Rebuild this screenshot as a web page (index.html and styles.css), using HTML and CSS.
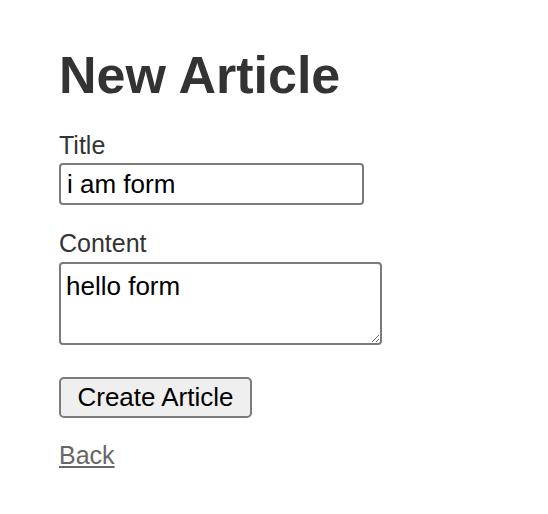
FILE: index.html
```html
<!DOCTYPE html>
<html lang="en">
<head>
    <meta charset="UTF-8">
    <meta name="viewport" content="width=device-width, initial-scale=1.0">
    <title>New Article</title>
    <link rel="stylesheet" href="styles.css">
</head>
<body>
    <h1>New Article</h1>
    <form class="article-form">
        <div class="field">
            <label for="article_title">Title</label>
            <input type="text" id="article_title" name="title" value="i am form">
        </div>
        <div class="field field-content">
            <label for="article_content">Content</label>
            <textarea id="article_content" name="content">hello form</textarea>
        </div>
        <div class="actions">
            <button type="submit" class="button">Create Article</button>
        </div>
    </form>
    <a class="back" href="#">Back</a>
</body>
</html>
```

FILE: styles.css
```css
body {
    margin: 0;
    padding: 0 0 0 59px;
    font-family: "Liberation Sans", Arial, sans-serif;
    font-size: 25px;
    line-height: 1.15;
    color: #333;
    background-color: #fff;
}
h1 {
    margin: 46px 0 0;
    font-size: 52px;
    line-height: 1.15;
    font-weight: bold;
}
.field {
    margin-top: 25px;
}
.field-content {
    margin-top: 24px;
}
label {
    display: block;
    height: 29px;
}
input, textarea, .button {
    font-family: "Liberation Sans", Arial, sans-serif;
    font-size: 26px;
    color: #000;
    box-sizing: border-box;
}
#article_title {
    display: block;
    margin-top: 3px;
    width: 305px;
    height: 42px;
    padding: 2px 6px 0;
    border: 2px solid #7b7b7b;
    border-radius: 4px;
}
#article_content {
    display: block;
    margin-top: 4px;
    width: 323px;
    height: 83px;
    padding: 8px 5px 4px;
    border: 2px solid #7b7b7b;
    border-radius: 4px;
    line-height: 1.15;
}
.actions {
    margin-top: 32px;
}
.button {
    display: block;
    width: 193px;
    height: 41px;
    padding: 1px 0 0;
    background-color: #efefef;
    border: 2px solid #7b7b7b;
    border-radius: 5px;
}
.back {
    display: inline-block;
    margin-top: 23px;
    color: #666;
}
```
